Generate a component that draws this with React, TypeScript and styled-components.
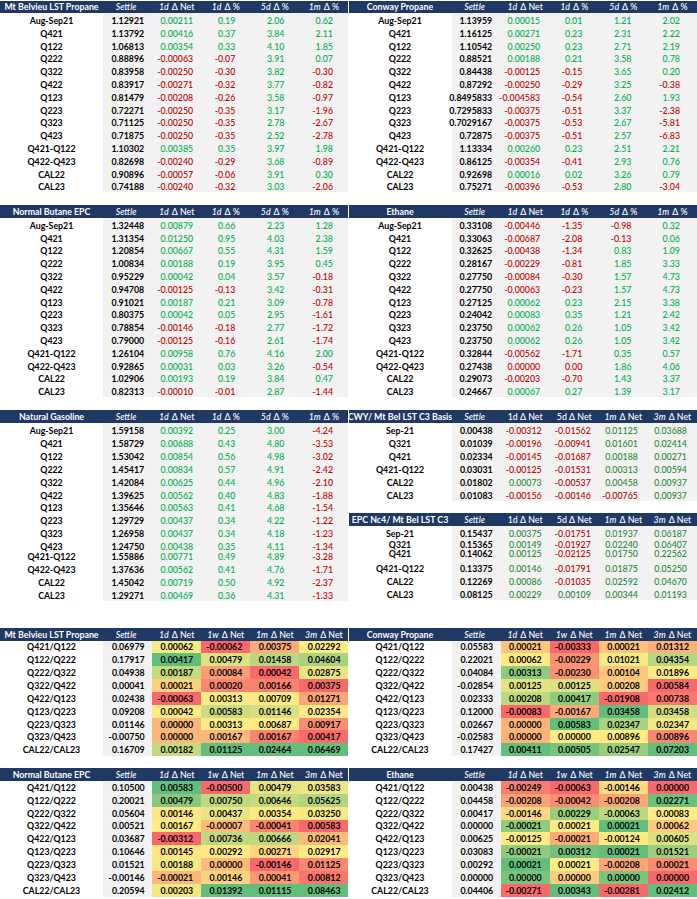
import React from 'react';
import styled, { createGlobalStyle } from 'styled-components';

const NAVY = '#1f3864';
const GRAY = '#f2f2f2';
const GREEN = '#00b050';
const RED = '#c00000';
const DKGREEN = '#2a8a35';

const GlobalStyle = createGlobalStyle`
  html, body { margin: 0; padding: 0; background: #fff; }
  body {
    font-family: Lato, "Noto Sans", "DejaVu Sans", sans-serif;
    font-size: 8.8px;
    color: #000;
  }
`;

const Page = styled.div`
  width: 697px;
  padding-top: 0.5px;
  display: flex;
  flex-direction: column;
`;

const Band = styled.div<{ $gap: number }>`
  display: grid;
  grid-template-columns: 348.5px 348.5px;
  align-items: start;
  margin-top: ${(p) => p.$gap}px;
`;

const Stack = styled.div<{ $gap: number }>`
  display: flex;
  flex-direction: column;
  gap: ${(p) => p.$gap}px;
`;

const Table = styled.div`
  display: flex;
  flex-direction: column;
`;

const RowGrid = styled.div<{ $h: number }>`
  display: grid;
  grid-template-columns: 103px repeat(5, 1fr);
  grid-template-rows: minmax(0, 1fr);
  height: ${(p) => p.$h}px;
  overflow: visible;
`;

const HeadCell = styled.div`
  background: ${NAVY};
  color: #fff;
  display: flex;
  align-items: center;
  justify-content: center;
  white-space: nowrap;
  line-height: 9px;
  font-weight: 500;
  min-width: 0;
`;

const TitleCell = styled(HeadCell)`
  font-weight: 700;
  overflow: hidden;
`;

const Em = styled.i`
  font-style: italic;
  margin-right: 3px;
`;

const BaseCell = styled.div<{ $v?: 'bottom' | 'middle' }>`
  display: flex;
  align-items: ${(p) => (p.$v === 'middle' ? 'center' : 'flex-end')};
  padding-bottom: ${(p) => (p.$v === 'middle' ? 0 : 1)}px;
  white-space: nowrap;
  line-height: 9px;
  min-width: 0;
  min-height: 0;
  overflow: visible;
`;

const LabelCell = styled(BaseCell)`
  justify-content: center;
  background: #fff;
  font-weight: 700;
  color: #000;
`;

const SettleCell = styled(BaseCell)<{ $pad: number }>`
  justify-content: flex-end;
  padding-right: ${(p) => p.$pad}px;
  background: ${GRAY};
  font-weight: 700;
  color: #000;
`;

const ValueCell = styled(BaseCell)<{ $pad: number; $color: string }>`
  justify-content: flex-end;
  padding-right: ${(p) => p.$pad}px;
  background: ${GRAY};
  font-weight: 500;
  color: ${(p) => p.$color};
`;

const HeatCell = styled(BaseCell)<{ $pad: number; $bg: string }>`
  justify-content: flex-end;
  padding-right: ${(p) => p.$pad}px;
  background: ${(p) => p.$bg};
  font-weight: 700;
  color: #000;
`;

type Head = { it?: string; rest?: string };
const TOP_HEAD: Head[] = [
  { it: 'Settle' },
  { it: '1d', rest: 'Δ Net' },
  { it: '1d', rest: 'Δ %' },
  { it: '5d', rest: 'Δ %' },
  { it: '1m', rest: 'Δ %' },
];
const BASIS_HEAD: Head[] = [
  { it: 'Settle' },
  { rest: '1d Δ Net' },
  { rest: '5d Δ Net' },
  { it: '1m', rest: 'Δ Net' },
  { it: '3m', rest: 'Δ Net' },
];
const HEAT_HEAD: Head[] = [
  { it: 'Settle' },
  { it: '1d', rest: 'Δ Net' },
  { it: '1w', rest: 'Δ Net' },
  { it: '1m', rest: 'Δ Net' },
  { it: '3m', rest: 'Δ Net' },
];

type Row = string[];

const MB_PROPANE: Row[] = [
  ['Aug-Sep21', '1.12921', '0.00211', '0.19', '2.06', '0.62'],
  ['Q421', '1.13792', '0.00416', '0.37', '3.84', '2.11'],
  ['Q122', '1.06813', '0.00354', '0.33', '4.10', '1.85'],
  ['Q222', '0.88896', '-0.00063', '-0.07', '3.91', '0.07'],
  ['Q322', '0.83958', '-0.00250', '-0.30', '3.82', '-0.30'],
  ['Q422', '0.83917', '-0.00271', '-0.32', '3.77', '-0.82'],
  ['Q123', '0.81479', '-0.00208', '-0.26', '3.58', '-0.97'],
  ['Q223', '0.72271', '-0.00250', '-0.35', '3.17', '-1.96'],
  ['Q323', '0.71125', '-0.00250', '-0.35', '2.78', '-2.67'],
  ['Q423', '0.71875', '-0.00250', '-0.35', '2.52', '-2.78'],
  ['Q421-Q122', '1.10302', '0.00385', '0.35', '3.97', '1.98'],
  ['Q422-Q423', '0.82698', '-0.00240', '-0.29', '3.68', '-0.89'],
  ['CAL22', '0.90896', '-0.00057', '-0.06', '3.91', '0.30'],
  ['CAL23', '0.74188', '-0.00240', '-0.32', '3.03', '-2.06'],
];

const CONWAY: Row[] = [
  ['Aug-Sep21', '1.13959', '0.00015', '0.01', '1.21', '2.02'],
  ['Q421', '1.16125', '0.00271', '0.23', '2.31', '2.22'],
  ['Q122', '1.10542', '0.00250', '0.23', '2.71', '2.19'],
  ['Q222', '0.88521', '0.00188', '0.21', '3.58', '0.78'],
  ['Q322', '0.84438', '-0.00125', '-0.15', '3.65', '0.20'],
  ['Q422', '0.87292', '-0.00250', '-0.29', '3.25', '-0.38'],
  ['Q123', '0.8495833', '-0.004583', '-0.54', '2.60', '1.93'],
  ['Q223', '0.7295833', '-0.00375', '-0.51', '3.37', '-2.38'],
  ['Q323', '0.7029167', '-0.00375', '-0.53', '2.67', '-5.81'],
  ['Q423', '0.72875', '-0.00375', '-0.51', '2.57', '-6.83'],
  ['Q421-Q122', '1.13334', '0.00260', '0.23', '2.51', '2.21'],
  ['Q422-Q423', '0.86125', '-0.00354', '-0.41', '2.93', '0.76'],
  ['CAL22', '0.92698', '0.00016', '0.02', '3.26', '0.79'],
  ['CAL23', '0.75271', '-0.00396', '-0.53', '2.80', '-3.04'],
];

const BUTANE: Row[] = [
  ['Aug-Sep21', '1.32448', '0.00879', '0.66', '2.23', '1.28'],
  ['Q421', '1.31354', '0.01250', '0.95', '4.03', '2.38'],
  ['Q122', '1.20854', '0.00667', '0.55', '4.31', '1.59'],
  ['Q222', '1.00834', '0.00188', '0.19', '3.95', '0.45'],
  ['Q322', '0.95229', '0.00042', '0.04', '3.57', '-0.18'],
  ['Q422', '0.94708', '-0.00125', '-0.13', '3.42', '-0.31'],
  ['Q123', '0.91021', '0.00187', '0.21', '3.09', '-0.78'],
  ['Q223', '0.80375', '0.00042', '0.05', '2.95', '-1.61'],
  ['Q323', '0.78854', '-0.00146', '-0.18', '2.77', '-1.72'],
  ['Q423', '0.79000', '-0.00125', '-0.16', '2.61', '-1.74'],
  ['Q421-Q122', '1.26104', '0.00958', '0.76', '4.16', '2.00'],
  ['Q422-Q423', '0.92865', '0.00031', '0.03', '3.26', '-0.54'],
  ['CAL22', '1.02906', '0.00193', '0.19', '3.84', '0.47'],
  ['CAL23', '0.82313', '-0.00010', '-0.01', '2.87', '-1.44'],
];

const ETHANE: Row[] = [
  ['Aug-Sep21', '0.33108', '-0.00446', '-1.35', '-0.98', '0.32'],
  ['Q421', '0.33063', '-0.00687', '-2.08', '-0.13', '0.06'],
  ['Q122', '0.32625', '-0.00438', '-1.34', '0.83', '1.09'],
  ['Q222', '0.28167', '-0.00229', '-0.81', '1.85', '3.33'],
  ['Q322', '0.27750', '-0.00084', '-0.30', '1.57', '4.73'],
  ['Q422', '0.27750', '-0.00063', '-0.23', '1.57', '4.73'],
  ['Q123', '0.27125', '0.00062', '0.23', '2.15', '3.38'],
  ['Q223', '0.24042', '0.00083', '0.35', '1.21', '2.42'],
  ['Q323', '0.23750', '0.00062', '0.26', '1.05', '3.42'],
  ['Q423', '0.23750', '0.00062', '0.26', '1.05', '3.42'],
  ['Q421-Q122', '0.32844', '-0.00562', '-1.71', '0.35', '0.57'],
  ['Q422-Q423', '0.27438', '0.00000', '0.00', '1.86', '4.06'],
  ['CAL22', '0.29073', '-0.00203', '-0.70', '1.43', '3.37'],
  ['CAL23', '0.24667', '0.00067', '0.27', '1.39', '3.17'],
];

const NATGAS: Row[] = [
  ['Aug-Sep21', '1.59158', '0.00392', '0.25', '3.00', '-4.24'],
  ['Q421', '1.58729', '0.00688', '0.43', '4.80', '-3.53'],
  ['Q122', '1.53042', '0.00854', '0.56', '4.98', '-3.02'],
  ['Q222', '1.45417', '0.00834', '0.57', '4.91', '-2.42'],
  ['Q322', '1.42084', '0.00625', '0.44', '4.96', '-2.10'],
  ['Q422', '1.39625', '0.00562', '0.40', '4.83', '-1.88'],
  ['Q123', '1.35646', '0.00563', '0.41', '4.68', '-1.54'],
  ['Q223', '1.29729', '0.00437', '0.34', '4.22', '-1.22'],
  ['Q323', '1.26958', '0.00437', '0.34', '4.18', '-1.23'],
  ['Q423', '1.24750', '0.00438', '0.35', '4.11', '-1.34'],
  ['Q421-Q122', '1.55886', '0.00771', '0.49', '4.89', '-3.28'],
  ['Q422-Q423', '1.37636', '0.00562', '0.41', '4.76', '-1.71'],
  ['CAL22', '1.45042', '0.00719', '0.50', '4.92', '-2.37'],
  ['CAL23', '1.29271', '0.00469', '0.36', '4.31', '-1.33'],
];
const NATGAS_H = [12.9, 12.9, 12.9, 12.9, 12.9, 12.9, 12.9, 12.9, 12.9, 12.9, 10.3, 12.9, 12.9, 12.9];

const CWY_BASIS: Row[] = [
  ['Sep-21', '0.00438', '-0.00312', '-0.01562', '0.01125', '0.03688'],
  ['Q321', '0.01039', '-0.00196', '-0.00941', '0.01601', '0.02414'],
  ['Q421', '0.02334', '-0.00145', '-0.01687', '0.00188', '0.00271'],
  ['Q421-Q122', '0.03031', '-0.00125', '-0.01531', '0.00313', '0.00594'],
  ['CAL22', '0.01802', '0.00073', '-0.00537', '0.00458', '0.00937'],
  ['CAL23', '0.01083', '-0.00156', '-0.00146', '-0.00765', '0.00937'],
];

const EPC_BASIS: Row[] = [
  ['Sep-21', '0.15437', '0.00375', '-0.01751', '0.01937', '0.06187'],
  ['Q321', '0.15365', '0.00149', '-0.01927', '0.02240', '0.06407'],
  ['Q421', '0.14062', '0.00125', '-0.02125', '0.01750', '0.22562'],
  ['Q421-Q122', '0.13375', '0.00146', '-0.01791', '0.01875', '0.05250'],
  ['CAL22', '0.12269', '0.00086', '-0.01035', '0.02592', '0.04670'],
  ['CAL23', '0.08125', '0.00229', '0.00109', '0.00344', '0.01193'],
];
const EPC_H = [13.3, 10.3, 9.4, 15, 13, 13];

const HEAT_MB: Row[] = [
  ['Q421/Q122', '0.06979', '0.00062', '-0.00062', '0.00375', '0.02292'],
  ['Q122/Q222', '0.17917', '0.00417', '0.00479', '0.01458', '0.04604'],
  ['Q222/Q322', '0.04938', '0.00187', '0.00084', '0.00042', '0.02875'],
  ['Q322/Q422', '0.00041', '0.00021', '0.00020', '0.00166', '0.00375'],
  ['Q422/Q123', '0.02438', '-0.00063', '0.00313', '0.00709', '0.01271'],
  ['Q123/Q223', '0.09208', '0.00042', '0.00583', '0.01146', '0.02354'],
  ['Q223/Q323', '0.01146', '0.00000', '0.00313', '0.00687', '0.00917'],
  ['Q323/Q423', '-0.00750', '0.00000', '0.00167', '0.00167', '0.00417'],
  ['CAL22/CAL23', '0.16709', '0.00182', '0.01125', '0.02464', '0.06469'],
];

const HEAT_CONWAY: Row[] = [
  ['Q421/Q122', '0.05583', '0.00021', '-0.00333', '0.00021', '0.01312'],
  ['Q122/Q222', '0.22021', '0.00062', '-0.00229', '0.01021', '0.04354'],
  ['Q222/Q322', '0.04084', '0.00313', '-0.00230', '0.00104', '0.01896'],
  ['Q322/Q422', '-0.02854', '0.00125', '0.00125', '0.00208', '0.00584'],
  ['Q422/Q123', '0.02333', '0.00208', '0.00417', '-0.01908', '0.00738'],
  ['Q123/Q223', '0.12000', '-0.00083', '-0.00167', '0.03458', '0.03458'],
  ['Q223/Q323', '0.02667', '0.00000', '0.00583', '0.02347', '0.02347'],
  ['Q323/Q423', '-0.02583', '0.00000', '0.00000', '0.00896', '0.00896'],
  ['CAL22/CAL23', '0.17427', '0.00411', '0.00505', '0.02547', '0.07203'],
];

const HEAT_BUTANE: Row[] = [
  ['Q421/Q122', '0.10500', '0.00583', '-0.00500', '0.00479', '0.03583'],
  ['Q122/Q222', '0.20021', '0.00479', '0.00750', '0.00646', '0.05625'],
  ['Q222/Q322', '0.05604', '0.00146', '0.00437', '0.00354', '0.03250'],
  ['Q322/Q422', '0.00521', '0.00167', '-0.00007', '-0.00041', '0.00583'],
  ['Q422/Q123', '0.03687', '-0.00312', '0.00736', '0.00666', '0.02041'],
  ['Q123/Q223', '0.10646', '0.00145', '0.00292', '0.00271', '0.02917'],
  ['Q223/Q323', '0.01521', '0.00188', '0.00000', '-0.00146', '0.01125'],
  ['Q323/Q423', '-0.00146', '-0.00021', '0.00146', '0.00041', '0.00812'],
  ['CAL22/CAL23', '0.20594', '0.00203', '0.01392', '0.01115', '0.08463'],
];

const HEAT_ETHANE: Row[] = [
  ['Q421/Q122', '0.00438', '-0.00249', '-0.00063', '-0.00146', '0.00000'],
  ['Q122/Q222', '0.04458', '-0.00208', '-0.00042', '-0.00208', '0.02271'],
  ['Q222/Q322', '0.00417', '-0.00146', '0.00229', '-0.00063', '0.00083'],
  ['Q322/Q422', '0.00000', '-0.00021', '0.00021', '0.00021', '0.00062'],
  ['Q422/Q123', '0.00625', '-0.00125', '-0.00021', '-0.00124', '0.00605'],
  ['Q123/Q223', '0.03083', '-0.00021', '0.00312', '0.00021', '0.01521'],
  ['Q223/Q323', '0.00292', '0.00021', '0.00021', '-0.00208', '0.00021'],
  ['Q323/Q423', '0.00000', '0.00000', '0.00000', '0.00000', '0.00000'],
  ['CAL22/CAL23', '0.04406', '-0.00271', '0.00343', '-0.00281', '0.02412'],
];

const C_RED = [248, 105, 107];
const C_YEL = [255, 235, 132];
const C_GRN = [99, 190, 123];

function mix(a: number[], b: number[], t: number): string {
  const c = a.map((v, i) => Math.round(v + (b[i] - v) * t));
  return `rgb(${c[0]}, ${c[1]}, ${c[2]})`;
}

function scaleColors(values: number[]): string[] {
  const s = [...values].sort((a, b) => a - b);
  const min = s[0];
  const max = s[s.length - 1];
  const pos = (s.length - 1) * 0.5;
  const lo = Math.floor(pos);
  const hi = Math.ceil(pos);
  const mid = s[lo] + (s[hi] - s[lo]) * (pos - lo);
  return values.map((v) => {
    if (v <= mid) {
      const t = mid === min ? 1 : (v - min) / (mid - min);
      return mix(C_RED, C_YEL, t);
    }
    const t = max === mid ? 0 : (v - mid) / (max - mid);
    return mix(C_YEL, C_GRN, t);
  });
}

function HeaderRow({ title, heads }: { title: string; heads: Head[] }) {
  return (
    <RowGrid $h={12.8}>
      <TitleCell>{title}</TitleCell>
      {heads.map((h, i) => (
        <HeadCell key={i}>
          {h.it && <Em>{h.it}</Em>}
          {h.rest}
        </HeadCell>
      ))}
    </RowGrid>
  );
}

function ChangeTable({
  title,
  heads,
  rows,
  pads,
  heights,
  green,
}: {
  title: string;
  heads: Head[];
  rows: Row[];
  pads: number[];
  heights?: number[];
  green: string;
}) {
  return (
    <Table>
      <HeaderRow title={title} heads={heads} />
      {rows.map((r, ri) => (
        <RowGrid key={ri} $h={heights ? heights[ri] : 12.8}>
          <LabelCell>{r[0]}</LabelCell>
          <SettleCell $pad={pads[0]}>{r[1]}</SettleCell>
          {r.slice(2).map((v, ci) => (
            <ValueCell key={ci} $pad={pads[ci + 1]} $color={parseFloat(v) <= 0 ? RED : green}>
              {v}
            </ValueCell>
          ))}
        </RowGrid>
      ))}
    </Table>
  );
}

function HeatTable({ title, rows }: { title: string; rows: Row[] }) {
  const cols = [2, 3, 4, 5].map((c) => scaleColors(rows.map((r) => parseFloat(r[c]))));
  const pads = [7.5, 8, 8, 8, 8];
  return (
    <Table>
      <HeaderRow title={title} heads={HEAT_HEAD} />
      {rows.map((r, ri) => (
        <RowGrid key={ri} $h={12.85}>
          <LabelCell $v="middle">{r[0]}</LabelCell>
          <SettleCell $v="middle" $pad={pads[0]}>
            {r[1]}
          </SettleCell>
          {r.slice(2).map((v, ci) => (
            <HeatCell key={ci} $v="middle" $pad={pads[ci + 1]} $bg={cols[ci][ri]}>
              {v}
            </HeatCell>
          ))}
        </RowGrid>
      ))}
    </Table>
  );
}

const LEFT_PADS = [8, 8, 15, 15, 15.5];
const RIGHT_PADS = [8.5, 9.5, 16.5, 16.5, 17];
const BASIS_PADS = [8, 8, 8, 10, 10];

export default function App() {
  return (
    <>
      <GlobalStyle />
      <Page>
        <Band $gap={0}>
          <ChangeTable title="Mt Belvieu LST Propane" heads={TOP_HEAD} rows={MB_PROPANE} pads={LEFT_PADS} green={GREEN} />
          <ChangeTable title="Conway Propane" heads={TOP_HEAD} rows={CONWAY} pads={RIGHT_PADS} green={GREEN} />
        </Band>
        <Band $gap={12.8}>
          <ChangeTable title="Normal Butane EPC" heads={TOP_HEAD} rows={BUTANE} pads={LEFT_PADS} green={GREEN} />
          <ChangeTable title="Ethane" heads={TOP_HEAD} rows={ETHANE} pads={RIGHT_PADS} green={GREEN} />
        </Band>
        <Band $gap={13.2}>
          <ChangeTable
            title="Natural Gasoline"
            heads={TOP_HEAD}
            rows={NATGAS}
            pads={LEFT_PADS}
            heights={NATGAS_H}
            green={GREEN}
          />
          <Stack $gap={12.8}>
            <ChangeTable
              title="CWY/ Mt Bel LST C3 Basis"
              heads={BASIS_HEAD}
              rows={CWY_BASIS}
              pads={BASIS_PADS}
              heights={[12.9, 12.9, 12.9, 12.9, 12.9, 12.9]}
              green={DKGREEN}
            />
            <ChangeTable
              title="EPC Nc4/ Mt Bel LST C3"
              heads={BASIS_HEAD}
              rows={EPC_BASIS}
              pads={BASIS_PADS}
              heights={EPC_H}
              green={DKGREEN}
            />
          </Stack>
        </Band>
        <Band $gap={26.7}>
          <HeatTable title="Mt Belvieu LST Propane" rows={HEAT_MB} />
          <HeatTable title="Conway Propane" rows={HEAT_CONWAY} />
        </Band>
        <Band $gap={12.1}>
          <HeatTable title="Normal Butane EPC" rows={HEAT_BUTANE} />
          <HeatTable title="Ethane" rows={HEAT_ETHANE} />
        </Band>
      </Page>
    </>
  );
}
